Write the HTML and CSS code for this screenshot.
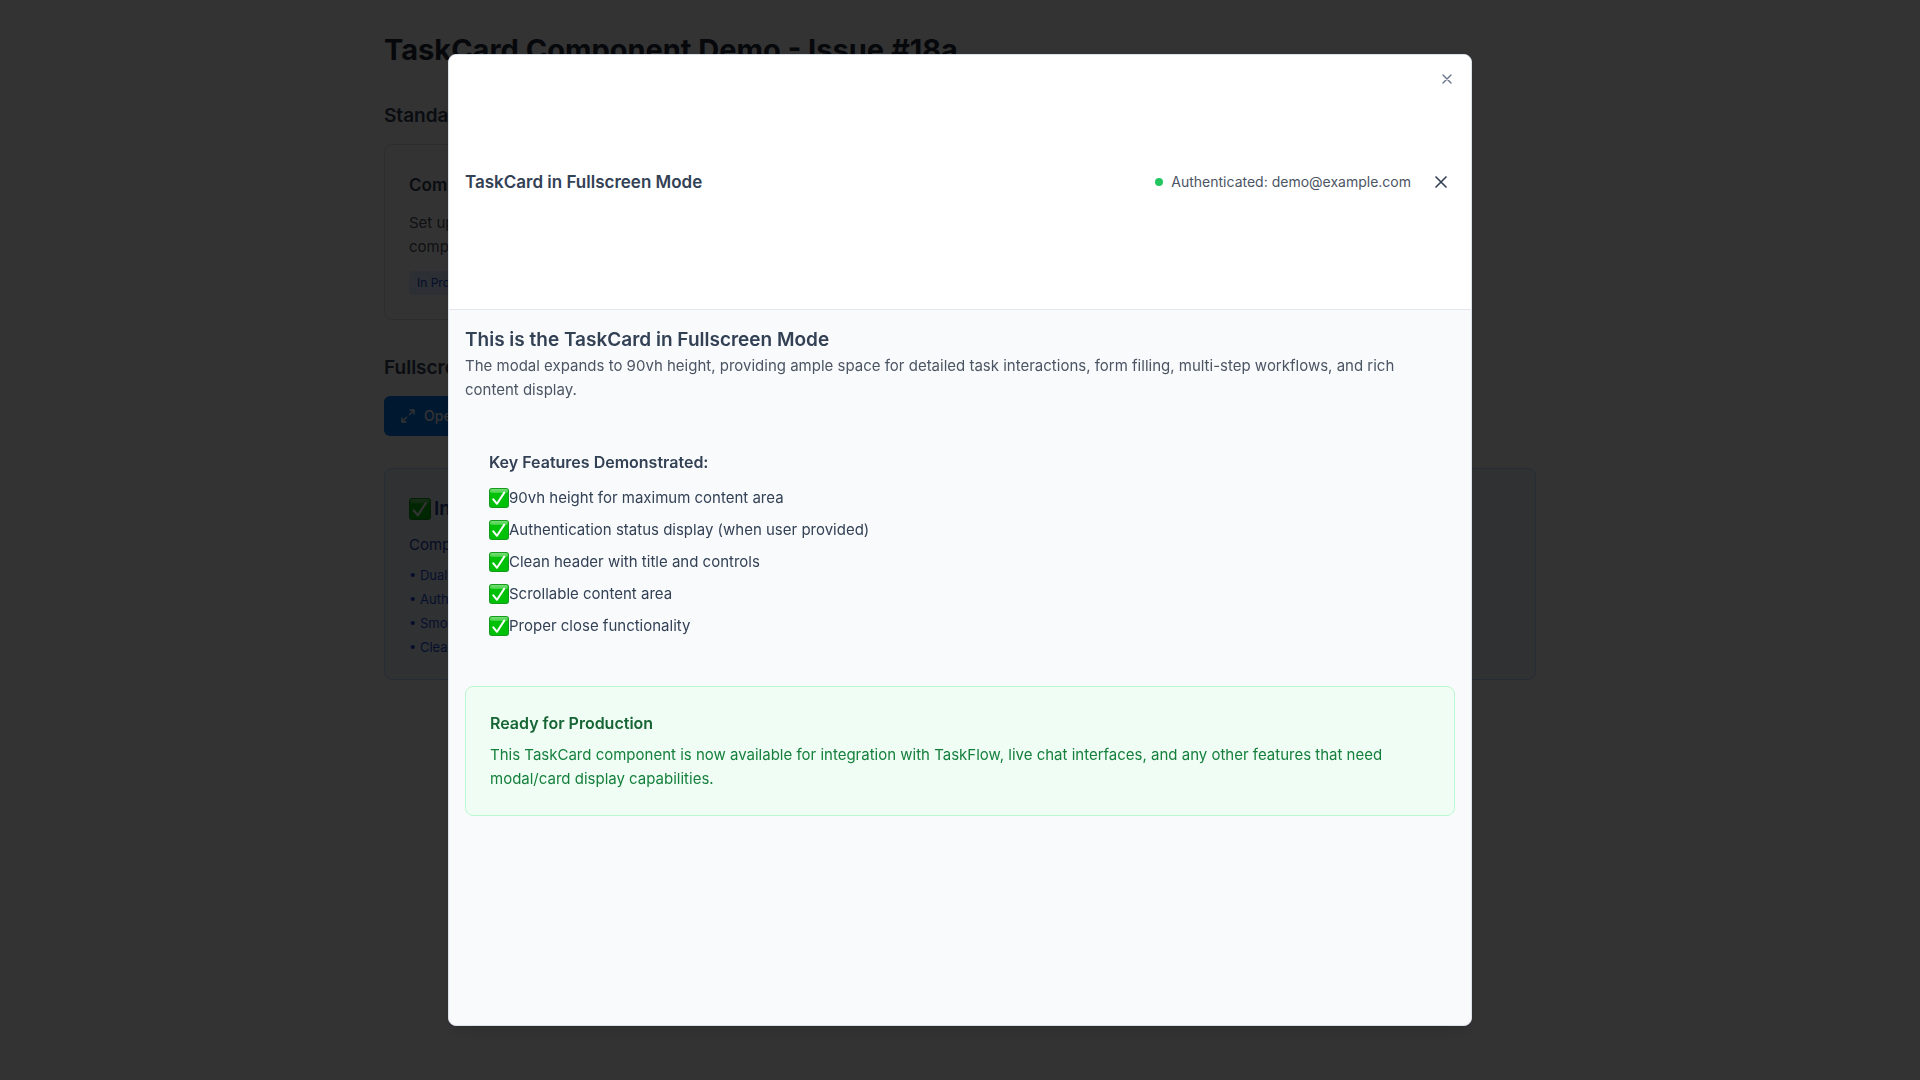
FILE: index.html
```html
<!DOCTYPE html>
<html lang="en">
<head>
<meta charset="utf-8">
<meta name="viewport" content="width=device-width, initial-scale=1">
<title>TaskCard Component Demo</title>
<link rel="stylesheet" href="styles.css">
</head>
<body>
<svg class="sprite" aria-hidden="true">
  <defs>
    <linearGradient id="check-shine" x1="0" y1="0" x2="0" y2="1">
      <stop offset="0" stop-color="#79df79"/>
      <stop offset="1" stop-color="#3fd13f"/>
    </linearGradient>
    <symbol id="check" viewBox="0 0 20 20">
      <rect width="20" height="20" rx="3" fill="#149a1c"/>
      <rect x="1" y="1" width="18" height="18" rx="2" fill="#00c108"/>
      <rect x="1" y="1" width="18" height="4" rx="2" fill="url(#check-shine)"/>
      <path d="M4.3 11.3 8 15.8 15.3 4.6" fill="none" stroke="#fff" stroke-width="2" stroke-linecap="round" stroke-linejoin="round"/>
    </symbol>
    <symbol id="cross" viewBox="0 0 24 24">
      <path d="M18 6 6 18M6 6l12 12" fill="none" stroke="currentColor" stroke-width="2" stroke-linecap="round" stroke-linejoin="round"/>
    </symbol>
  </defs>
</svg>

<main class="page">
  <h1 class="page-title">TaskCard Component Demo - Issue #18a</h1>

  <section>
    <h2 class="section-title">Standard Card</h2>
    <article class="task">
      <h3 class="task-title">Component Setup</h3>
      <p class="task-text">Set up the new task<br>components</p>
      <span class="badge">In Progress</span>
    </article>
  </section>

  <section>
    <h2 class="section-title">Fullscreen Mode</h2>
    <button class="open" type="button">
      <svg class="icon-sm" viewBox="0 0 24 24" fill="none" stroke="currentColor" stroke-width="2" stroke-linecap="round" stroke-linejoin="round" aria-hidden="true"><path d="M15 3h6v6M9 21H3v-6M21 3l-7 7M3 21l7-7"/></svg>
      Open Fullscreen
    </button>
  </section>

  <section class="summary">
    <h2 class="summary-title"><svg class="check-lg" role="img" aria-label="Done"><use href="#check"/></svg>Integration</h2>
    <p class="summary-lead">Component</p>
    <ul class="summary-list">
      <li>• Dual modes</li>
      <li>• Authentication</li>
      <li>• Smooth</li>
      <li>• Clean</li>
    </ul>
  </section>
</main>

<div class="overlay">
  <div class="modal" role="dialog" aria-modal="true" aria-labelledby="modal-title">
    <header class="modal-head">
      <h2 class="modal-title" id="modal-title">TaskCard in Fullscreen Mode</h2>
      <div class="modal-tools">
        <p class="status"><span class="dot"></span>Authenticated: demo@example.com</p>
        <button class="exit" type="button" aria-label="Exit fullscreen"><svg class="icon-md"><use href="#cross"/></svg></button>
      </div>
    </header>
    <div class="modal-body">
      <div>
        <h3 class="lead-title">This is the TaskCard in Fullscreen Mode</h3>
        <p class="lead-text">The modal expands to 90vh height, providing ample space for detailed task interactions, form filling, multi-step workflows, and rich content display.</p>
      </div>
      <section class="features">
        <h4 class="features-title">Key Features Demonstrated:</h4>
        <ul class="features-list">
          <li><svg class="check" role="img" aria-label="Done"><use href="#check"/></svg>90vh height for maximum content area</li>
          <li><svg class="check" role="img" aria-label="Done"><use href="#check"/></svg>Authentication status display (when user provided)</li>
          <li><svg class="check" role="img" aria-label="Done"><use href="#check"/></svg>Clean header with title and controls</li>
          <li><svg class="check" role="img" aria-label="Done"><use href="#check"/></svg>Scrollable content area</li>
          <li><svg class="check" role="img" aria-label="Done"><use href="#check"/></svg>Proper close functionality</li>
        </ul>
      </section>
      <section class="ready">
        <h4 class="ready-title">Ready for Production</h4>
        <p>This TaskCard component is now available for integration with TaskFlow, live chat interfaces, and any other features that need modal/card display capabilities.</p>
      </section>
    </div>
    <button class="close" type="button" aria-label="Close"><svg class="icon-sm"><use href="#cross"/></svg></button>
  </div>
</div>
</body>
</html>
```
FILE: styles.css
```css
*, *::before, *::after { box-sizing: border-box; }

body, h1, h2, h3, h4, p, ul { margin: 0; }

body {
  background: #fff;
  color: #334155;
  font: 400 15px/24px Inter, "Liberation Sans", sans-serif;
}

ul { padding: 0; list-style: none; }
svg { display: block; flex: none; }

button {
  padding: 0;
  border: 0;
  background: none;
  color: inherit;
  font: inherit;
  cursor: pointer;
}

.sprite { position: absolute; width: 0; height: 0; }
.icon-sm { width: 16px; height: 16px; }
.icon-md { width: 20px; height: 20px; }
.check { width: 20px; height: 20px; }
.check-lg { width: 22px; height: 22px; }

/* Demo page */
.page {
  display: grid;
  gap: 32px;
  max-width: 1152px;
  margin: 0 auto;
  padding: 32px 0;
}

.page-title { color: #1e293b; font-size: 29px; font-weight: 700; line-height: 36px; }
.section-title { margin-bottom: 12px; color: #334155; font-size: 19px; font-weight: 600; line-height: 32px; }

.task {
  max-width: 448px;
  padding: 24px;
  border: 1px solid #d5dbe3;
  border-radius: 8px;
}
.task-title { margin-bottom: 10px; font-size: 17px; font-weight: 600; line-height: 32px; }
.task-text { margin-bottom: 12px; color: #4b5563; }
.badge {
  display: block;
  width: fit-content;
  padding: 0 8px;
  border-radius: 4px;
  background: #dbeafe;
  color: #1d4ed8;
  font-size: 12px;
}

.open {
  display: flex;
  align-items: center;
  gap: 8px;
  height: 40px;
  padding: 0 16px;
  border-radius: 6px;
  background: #0078f0;
  color: #fff;
  font-size: 14px;
  font-weight: 500;
}

.summary {
  padding: 24px 24px 20px;
  border: 1px solid #bfdbfe;
  border-radius: 8px;
  background: #eff6ff;
  color: #1d4ed8;
}
.summary-title {
  display: flex;
  align-items: center;
  gap: 3px;
  margin-bottom: 8px;
  color: #1e3a8a;
  font-size: 19px;
  font-weight: 600;
  line-height: 32px;
}
.summary-lead { margin-bottom: 6px; color: #1e40af; }
.summary-list { font-size: 13px; }

/* Dialog */
.overlay {
  position: fixed;
  inset: 0;
  display: grid;
  place-items: center;
  background: rgb(0 0 0 / 80%);
}

.modal {
  position: relative;
  display: grid;
  width: 100%;
  max-width: 1024px;
  height: 90vh;
  overflow: auto;
  border: 1px solid #dbe1ea;
  border-radius: 8px;
  background: #f9fafc;
  box-shadow: 0 10px 15px -3px rgb(0 0 0 / 10%), 0 4px 6px -4px rgb(0 0 0 / 10%);
}

.modal-head {
  display: flex;
  align-items: center;
  justify-content: space-between;
  padding: 16px;
  border-bottom: 1px solid #e5e7eb;
  background: #fff;
}
.modal-title { font-size: 17px; font-weight: 600; line-height: 28px; }
.modal-tools { display: flex; align-items: center; gap: 16px; }
.status { display: flex; align-items: center; gap: 8px; color: #4b5563; font-size: 14px; line-height: 20px; }
.dot { width: 8px; height: 8px; border-radius: 50%; background: #22c55e; }
.exit { padding: 4px; }
.close { position: absolute; top: 16px; right: 16px; color: #64748b; }

.modal-body { padding: 16px; }
.lead-title { font-size: 19px; font-weight: 600; line-height: 28px; }
.lead-text { padding-right: 16px; color: #4b5563; }

.features { margin: 24px 0; padding: 24px; }
.features-title { margin-bottom: 12px; font-size: 16px; font-weight: 600; }
.features-list { display: grid; gap: 8px; }
.features-list li { display: flex; align-items: center; }

.ready {
  padding: 24px;
  border: 1px solid #bbf7d0;
  border-radius: 8px;
  background: #f0fdf4;
  color: #15803d;
}
.ready-title { margin-bottom: 8px; color: #166534; font-size: 16px; font-weight: 600; }
```
